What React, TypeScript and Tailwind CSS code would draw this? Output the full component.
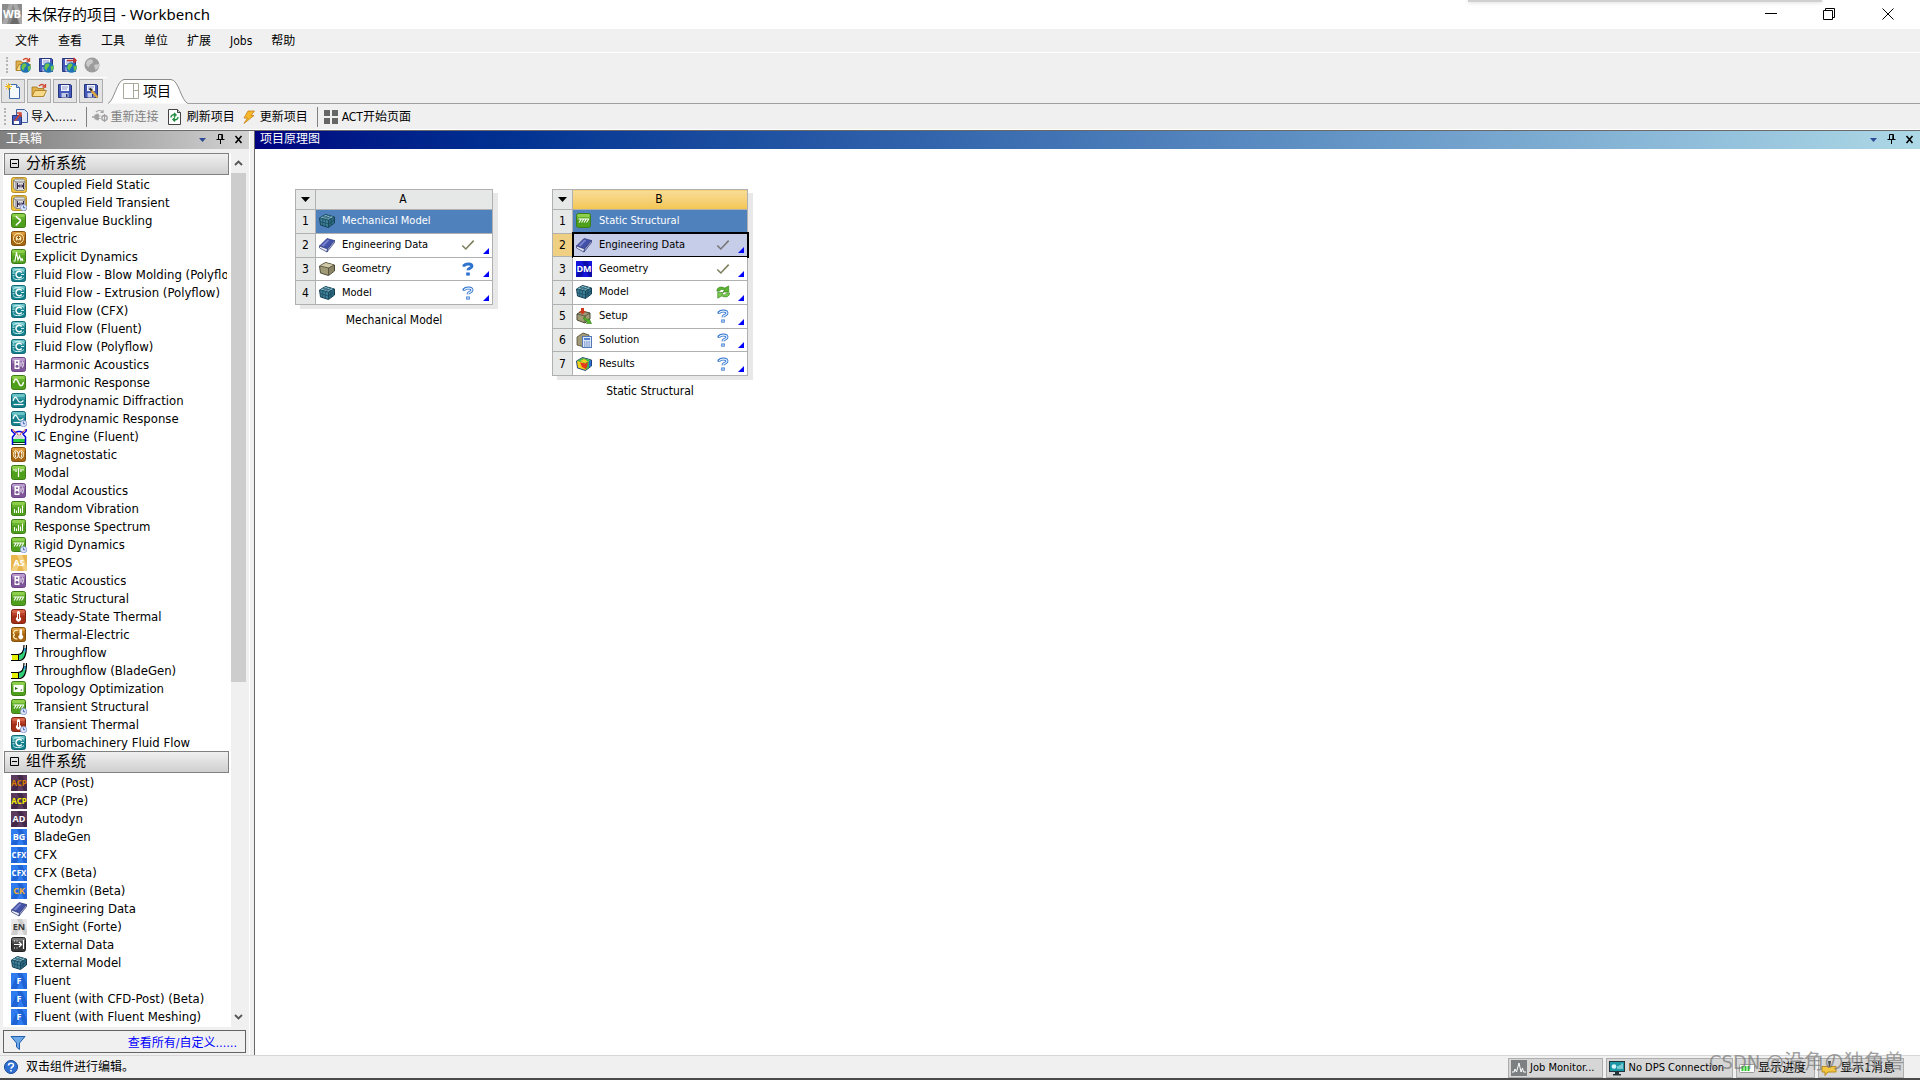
import { FC, ReactNode } from "react";

interface IconProps {
	children?: ReactNode;
	size?: number;
}

const Icon: FC<IconProps> = ({ children, size = 16 }) => (
	<svg width={size} height={size} viewBox="0 0 16 16" className="shrink-0" aria-hidden="true">
		{children}
	</svg>
);

const Clock = () => (
	<g>
		<circle cx="12.6" cy="12.6" r="3.2" fill="#dfe8fb" stroke="#7d93cf" strokeWidth="0.8" />
		<path d="M12.4 10.6v2.2h1.8" stroke="#3553a8" fill="none" strokeWidth="0.9" />
	</g>
);

const TILE_COLORS = {
	green: ["#8ed04b", "#4e9f1c", "#3d7c16"],
	teal: ["#6cc3c7", "#14808c", "#0e6974"],
	purple: ["#b99bcd", "#7f5799", "#6a4484"],
	orange: ["#dd9d3e", "#a8650f", "#83500d"],
	red: ["#d6654a", "#a52f16", "#7f2411"],
	dark: ["#777777", "#383838", "#222222"],
};

interface TileProps {
	color: keyof typeof TILE_COLORS;
	clock?: boolean;
	children?: ReactNode;
}

// rounded glossy square behind most analysis system icons
const Tile: FC<TileProps> = ({ color, clock, children }) => {
	const [top, base, edge] = TILE_COLORS[color];
	return (
		<Icon>
			<rect x="0.5" y="0.5" width="14" height="14" rx="2" fill={base} stroke={edge} />
			<rect x="1" y="1" width="13" height="3" rx="1.5" fill={top} />
			<rect x="1" y="3.5" width="13" height="3" fill={top} opacity="0.4" />
			{children}
			{clock && <Clock />}
		</Icon>
	);
};

const CoupledIcon = ({ clock }: { clock?: boolean }) => (
	<Icon>
		<rect x="0.5" y="0.5" width="15" height="15" rx="2" fill="#eec13f" stroke="#b98f26" />
		<path d="M2.5 3.500 4.500 2h8L14 3.500V12l-1.500 1.500H5L2.500 11z" fill="#dcdcdc" stroke="#777" strokeWidth="0.8" />
		<path d="M2.500 3.500 5 5h9M5 5v8.500" stroke="#777" fill="none" strokeWidth="0.9" />
		<path d="M6.500 6v6M12.500 6v6M7 9h5.500M8.800 7.500 7.500 9l1.300 1.500M10.800 7.500 12 9l-1.200 1.500" stroke="#35264f" fill="none" />
		{clock && <Clock />}
	</Icon>
);

const FluidIcon = () => (
	<Tile color="teal">
		<path d="M2 4.500C4 2 6 2.500 8 2.500c3 0 4 1.500 5 2M2 10.500C4 13 6 12.500 8 12.500c3 0 4-1.500 5-2M1.500 6.200h2M1.500 8.800h2" stroke="#c9f0f0" fill="none" />
		<path d="M10.700 5.500A3.200 3.200 0 1 0 10.700 9.500" stroke="#ffffff" fill="none" strokeWidth="1.500" />
		<path d="M10 7.500h3" stroke="#c9f0f0" />
	</Tile>
);

const AcousticsIcon = () => (
	<Tile color="purple">
		<rect x="3.5" y="3" width="5" height="9" fill="#fff" />
		<circle cx="6" cy="5.3" r="1" fill="#7f5799" />
		<circle cx="6" cy="9.2" r="1.5" fill="#7f5799" />
		<path d="M10 5.5v4M11.5 4.5c1 2 1 4 0 6" stroke="#fff" fill="none" />
	</Tile>
);

const SpectrumIcon = () => (
	<Tile color="green">
		<path d="M3.5 8v4M5.5 9.500v2.500M7.5 6v6M9.5 7.5v4.5M11.5 4.5V12" stroke="#fff" strokeWidth="1.1" />
	</Tile>
);

const StructuralIcon = ({ clock }: { clock?: boolean }) => (
	<Tile color="green" clock={clock}>
		<path d="M2.5 6h10.5M5 6.5l-2 3M7.5 6.5l-2 3M10 6.5l-2 3M12.5 6.5l-2 3" stroke="#fff" strokeWidth="1.1" />
	</Tile>
);

const ThermalIcon = ({ clock }: { clock?: boolean }) => (
	<Tile color="red" clock={clock}>
		<path d="M6 3.5a1.5 1.5 0 0 1 3 0V8a2.5 2.5 0 1 1-3 0z" fill="#fff" />
		<path d="M7.5 5v5" stroke="#a52f16" />
	</Tile>
);

const HydroIcon = ({ clock }: { clock?: boolean }) => (
	<Tile color="teal" clock={clock}>
		<path d="M2 8c1.5-5 3-5 4.5-1.5S9.5 10 12.5 7.5" stroke="#fff" fill="none" strokeWidth="1.2" />
		<path d="M2.5 11.5h10" stroke="#fff" strokeWidth="1.2" />
	</Tile>
);

const ThroughflowIcon = () => (
	<Icon>
		<path d="M1 10h6v5H1z" fill="#e8f000" />
		<path d="M7 10c3 0 4-2 4.500-4l3.500 1c-1 5-3 8-8 8z" fill="#2fd07a" />
		<path d="m11.500 6 1.500-3h2l-.3 4z" fill="#2ba9e0" />
		<path d="M0 9.500h7c4 0 6-3 6-9.500M0 15.500h8c6 0 7.500-7 7.500-15.500" fill="none" stroke="#000" strokeWidth="1.200" />
		<path d="M7.500 9.500v6" stroke="#000" />
	</Icon>
);

interface BadgeProps {
	label: string;
	bg: string;
	shade: string;
	fg: string;
}

const LetterIcon: FC<BadgeProps> = ({ label, bg, shade, fg }) => (
	<Icon>
		<rect width="16" height="16" fill={bg} />
		<path d="M8 0h3l5 11v5h-3L6 0zM0 16 5 4l3 6-2 6z" fill={shade} />
		<text
			x="8"
			y="11"
			textAnchor="middle"
			fontSize={label.length > 2 ? 8 : 9}
			fontWeight="700"
			fontFamily="'Open Sans', sans-serif"
			fill={fg}
		>
			{label}
		</text>
	</Icon>
);

const FluentIcon = () => <LetterIcon label="F" bg="#2f7bf0" shade="#1f63d4" fg="#fff" />;
const CfxIcon = () => <LetterIcon label="CFX" bg="#2f7bf0" shade="#1f63d4" fg="#fff" />;

const BookIcon = () => (
	<Icon>
		<path d="M.5 9 8 1.500l7.500 2L8.500 12z" fill="#4352a8" stroke="#2c3878" strokeWidth="0.7" />
		<path d="M.5 9v2l7.500 4 .5-3z" fill="#e9ebf6" stroke="#2c3878" strokeWidth="0.7" />
		<path d="m8.500 12 7-8.500v2L8 15z" fill="#a9afd6" stroke="#2c3878" strokeWidth="0.7" />
		<path d="m2.500 8.500 6-6 2 .6-6 6.400z" fill="#7783ce" />
	</Icon>
);

const CubeIcon = ({ mesh }: { mesh?: boolean }) => (
	<Icon>
		<path d="m.5 5 6-3.500L15.500 4v6l-6 4.500-8-2.500z" fill={mesh ? "#3b8098" : "#a19a76"} stroke={mesh ? "#173f51" : "#4c4937"} strokeLinejoin="round" />
		<path d="m1 5 5.500-3L15 4 9.500 7z" fill={mesh ? "#7fbccd" : "#cfc9a8"} />
		<path d="M9.500 7 15 4v6l-5.500 4z" fill={mesh ? "#2b6a82" : "#8b8566"} />
		<path d="m1 5 8.500 2L15 4M9.500 7v7" stroke={mesh ? "#173f51" : "#4c4937"} fill="none" strokeWidth="0.8" />
		{mesh && (
			<path d="m1 8.500 8.500 2.500 5.500-4M3.700 5.700v6.800M6.300 6.300v7.200M12 6v6.500M4 3.300l8 2.200M6.500 6.300l5.500-3.200M3.700 5.700l5.500-3.200" stroke="#173f51" fill="none" strokeWidth="0.600" />
		)}
	</Icon>
);

const CheckIcon = ({ color = "#7f7f5f" }: { color?: string }) => (
	<Icon size={14}>
		<path d="m1.500 8.500 4 4L14.500 3" stroke={color} fill="none" strokeWidth="1.800" />
	</Icon>
);

const QuestionIcon = ({ solid }: { solid?: boolean }) => (
	<Icon size={14}>
		<path d="M3.500 5.500V4c2-2.500 9-2.500 9 .8 0 2.500-4.500 2-4.500 4.700" stroke="#2f73cf" fill="none" strokeWidth="3.400" />
		{!solid && <path d="M3.500 4.500c2-2.700 9-2.700 9 .3 0 2.500-4.500 2-4.500 4.700" stroke="#e8f2ff" fill="none" strokeWidth="1.400" />}
		<rect x="6.500" y="12.500" width="3" height="2.500" fill={solid ? "#2f73cf" : "#e8f2ff"} stroke="#2f73cf" />
	</Icon>
);

const RefreshIcon = () => (
	<Icon size={14}>
		<path d="M1 7C1 3 5 1 10 3.500L14.500 1v7H8l2-2C7 4.500 4.500 5 4 7z" fill="#5cb531" stroke="#2f7a14" strokeWidth="0.7" />
		<path d="M15.500 9c0 4-4 6-9 3.500L2 15V8.500h6.500l-2 2c3 1.500 5 .5 5.500-1.500z" fill="#7ccc50" stroke="#2f7a14" strokeWidth="0.7" />
	</Icon>
);

const SetupIcon = () => (
	<Icon>
		<path d="m1 6 5-3 8 2v6l-5 4-8-3z" fill="#a19a76" stroke="#4c4937" />
		<path d="m1 6 8 2 5-3M9 8v7" stroke="#4c4937" fill="none" strokeWidth="0.8" />
		<path d="M5 0h3v3h2L6.500 6.500 3 3h2z" fill="#cf3a1e" />
		<path d="m8 9 4 3 1-1.500 2.500 5h-5l1-1.500-4-3z" fill="#55b529" stroke="#2f7a14" strokeWidth="0.600" />
	</Icon>
);

const SolutionIcon = () => (
	<Icon>
		<path d="m1 5 6-4 6 2v9l-5 3-7-2z" fill="#a19a76" stroke="#4c4937" strokeWidth="0.8" />
		<rect x="6.500" y="4.500" width="9" height="11" fill="#dce8fa" stroke="#5578b8" />
		<rect x="8" y="6" width="6" height="2" fill="#4f7fd0" />
		<path d="M8 10h6M8 12h6M8 14h6" stroke="#5578b8" strokeDasharray="1.500 0.700" />
	</Icon>
);

const ResultsIcon = () => (
	<Icon>
		<path d="m.5 5 6-3.500L15.500 4v6l-6 4.500-8-2.500z" fill="#f2d21d" stroke="#21407e" strokeLinejoin="round" />
		<path d="m1 5 5.500-3L15 4 9.500 7z" fill="#3fb44a" />
		<path d="m4 5 4-2 4 2.500L9.500 7z" fill="#f2d21d" />
		<path d="M9.500 7 15 4v6l-5.500 4z" fill="#3fb44a" />
		<path d="m13 5 2-1v6l-2 1.500z" fill="#2a6bd6" />
		<path d="m4 6.500 5.500 1L12 6l-1 5-1.500 2L6 11z" fill="#e23a1b" />
	</Icon>
);

const Floppy = () => (
	<g>
		<path d="M1.500 1.500h12l1 1v12h-13z" fill="#4459b8" stroke="#27357d" />
		<rect x="4" y="2" width="8" height="6" fill="#f2f4fc" />
		<path d="M5 4h6M5 6h5" stroke="#8b97cf" />
		<rect x="4.500" y="10" width="7" height="4.500" fill="#c3cae8" />
		<rect x="9" y="11" width="1.500" height="3" fill="#27357d" />
	</g>
);

const Globe = () => (
	<g>
		<circle cx="10.500" cy="10.500" r="5.300" fill="#1c73b8" />
		<path d="M7 8c2-2.500 4.500-1.500 4.500 0S9 10 9 12.500s-2-.5-2.700-1.500zM12.500 9.500l3-1c.6 2 0 4.500-2 6z" fill="#6ec54a" />
	</g>
);

const Folder = () => (
	<g>
		<path d="M1 4h5l1 1.500h6V13H1z" fill="#e0b04a" stroke="#a3761d" strokeWidth="0.8" />
		<path d="m1 13.500 3-6h11.500l-3 6z" fill="#f8d987" stroke="#a3761d" strokeWidth="0.8" />
		<path d="M8 3c2-2 4-2 5.500 0M14.500 1v3h-3" stroke="#d2452d" fill="none" strokeWidth="1.3" />
	</g>
);

interface ListItem {
	name: string;
	icon: ReactNode;
}

const ANALYSIS_SYSTEMS: ListItem[] = [
	{ name: "Coupled Field Static", icon: <CoupledIcon /> },
	{ name: "Coupled Field Transient", icon: <CoupledIcon clock /> },
	{
		name: "Eigenvalue Buckling",
		icon: (
			<Tile color="green">
				<path d="M5 3c1 2.500 4.500 3 4.500 4.500S6 10 5 12.500" stroke="#fff" fill="none" strokeWidth="1.6" />
			</Tile>
		),
	},
	{
		name: "Electric",
		icon: (
			<Tile color="orange">
				<circle cx="7.500" cy="7.500" r="5" fill="none" stroke="#ffeeb8" />
				<circle cx="7.500" cy="7.500" r="2.800" fill="#ffeeb8" />
				<path d="M6 6.500h3M7.500 5v3M6 9.300h3" stroke="#83500d" strokeWidth="0.9" />
			</Tile>
		),
	},
	{
		name: "Explicit Dynamics",
		icon: (
			<Tile color="green">
				<path d="M2.500 12h1.500L5.500 3l1.500 8 1.500-4 1.500 4.500 1-2 1 2.500" stroke="#fff" fill="none" strokeWidth="1.1" />
			</Tile>
		),
	},
	{ name: "Fluid Flow - Blow Molding (Polyflow)", icon: <FluidIcon /> },
	{ name: "Fluid Flow - Extrusion (Polyflow)", icon: <FluidIcon /> },
	{ name: "Fluid Flow (CFX)", icon: <FluidIcon /> },
	{ name: "Fluid Flow (Fluent)", icon: <FluidIcon /> },
	{ name: "Fluid Flow (Polyflow)", icon: <FluidIcon /> },
	{ name: "Harmonic Acoustics", icon: <AcousticsIcon /> },
	{
		name: "Harmonic Response",
		icon: (
			<Tile color="green">
				<path d="M2.500 8c1-5 3.500-5 5-.5s4 4 5-.5" stroke="#fff" fill="none" strokeWidth="1.4" />
			</Tile>
		),
	},
	{ name: "Hydrodynamic Diffraction", icon: <HydroIcon /> },
	{ name: "Hydrodynamic Response", icon: <HydroIcon clock /> },
	{
		name: "IC Engine (Fluent)",
		icon: (
			<Icon>
				<path d="m3.500 8 2.500-2.500h4L12.500 8v2h-9z" fill="#d8d8d8" />
				<path d="M2 10h12v3H2z" fill="#20cc40" />
				<path d="M2 13.500h12M2 15.500h12" stroke="#0a3a1a" />
				<path d="M.8 0v2L4 5 1.500 8v8M15.200 0v2L12 5l2.500 3v8M4 3.500l3-1h2l3 1" stroke="#0000e0" fill="none" strokeWidth="1.500" />
				<path d="m1.500.5 6 5.500M14.500.5l-6 5.500" stroke="#d43a3a" strokeWidth="1.100" strokeDasharray="1.500 0.500" />
			</Icon>
		),
	},
	{
		name: "Magnetostatic",
		icon: (
			<Tile color="orange">
				<path d="M5 3C1.500 5 1.500 10 5 12M10 3c3.500 2 3.500 7 0 9" stroke="#ffeeb8" fill="none" />
				<ellipse cx="5.700" cy="7.500" rx="1.600" ry="3.500" fill="none" stroke="#fff" />
				<ellipse cx="9.300" cy="7.500" rx="1.600" ry="3.500" fill="none" stroke="#fff" />
			</Tile>
		),
	},
	{
		name: "Modal",
		icon: (
			<Tile color="green">
				<path d="M7.500 3v9M5 4v3M10 4v3M3 4v1.500M12 4v1.500" stroke="#fff" strokeWidth="1.2" />
			</Tile>
		),
	},
	{ name: "Modal Acoustics", icon: <AcousticsIcon /> },
	{ name: "Random Vibration", icon: <SpectrumIcon /> },
	{ name: "Response Spectrum", icon: <SpectrumIcon /> },
	{ name: "Rigid Dynamics", icon: <StructuralIcon clock /> },
	{ name: "SPEOS", icon: <LetterIcon label="AS" bg="#e9b64c" shade="#f3cf80" fg="#fff" /> },
	{ name: "Static Acoustics", icon: <AcousticsIcon /> },
	{ name: "Static Structural", icon: <StructuralIcon /> },
	{ name: "Steady-State Thermal", icon: <ThermalIcon /> },
	{
		name: "Thermal-Electric",
		icon: (
			<Tile color="orange">
				<path d="M6.500 3.500C2 3 1.500 7.500 4 7.500M6.500 12C2 12 1.500 8 4 8" stroke="#ffeeb8" fill="none" strokeWidth="1.2" />
				<path d="M8.500 3.500a1.300 1.300 0 0 1 2.600 0V8a2.300 2.300 0 1 1-2.600 0z" fill="#fff" />
			</Tile>
		),
	},
	{ name: "Throughflow", icon: <ThroughflowIcon /> },
	{ name: "Throughflow (BladeGen)", icon: <ThroughflowIcon /> },
	{
		name: "Topology Optimization",
		icon: (
			<Tile color="green">
				<rect x="2.500" y="4" width="10" height="7" fill="#fff" />
				<path d="m4 6 3 1.500L4 9zM9 9.500h2V8z" fill="#2f6f12" />
			</Tile>
		),
	},
	{ name: "Transient Structural", icon: <StructuralIcon clock /> },
	{ name: "Transient Thermal", icon: <ThermalIcon clock /> },
	{ name: "Turbomachinery Fluid Flow", icon: <FluidIcon /> },
];

const COMPONENT_SYSTEMS: ListItem[] = [
	{ name: "ACP (Post)", icon: <LetterIcon label="ACP" bg="#5b3a5e" shade="#44284a" fg="#d97a00" /> },
	{ name: "ACP (Pre)", icon: <LetterIcon label="ACP" bg="#5b3a5e" shade="#44284a" fg="#f5f000" /> },
	{ name: "Autodyn", icon: <LetterIcon label="AD" bg="#5b3a5e" shade="#44284a" fg="#fff" /> },
	{ name: "BladeGen", icon: <LetterIcon label="BG" bg="#2f7bf0" shade="#1f63d4" fg="#fff" /> },
	{ name: "CFX", icon: <CfxIcon /> },
	{ name: "CFX (Beta)", icon: <CfxIcon /> },
	{ name: "Chemkin (Beta)", icon: <LetterIcon label="CK" bg="#2f7bf0" shade="#1f63d4" fg="#f0b030" /> },
	{ name: "Engineering Data", icon: <BookIcon /> },
	{ name: "EnSight (Forte)", icon: <LetterIcon label="EN" bg="#e8e8e8" shade="#cfcfcf" fg="#3c3c3c" /> },
	{
		name: "External Data",
		icon: (
			<Tile color="dark">
				<path d="M3 7.500h7M8 5l2.500 2.500L8 10M12.500 3v9" stroke="#fff" fill="none" strokeWidth="1.2" />
				<path d="M3 4h5M3 11h5" stroke="#fff" strokeDasharray="1 1.5" />
			</Tile>
		),
	},
	{ name: "External Model", icon: <CubeIcon mesh /> },
	{ name: "Fluent", icon: <FluentIcon /> },
	{ name: "Fluent (with CFD-Post) (Beta)", icon: <FluentIcon /> },
	{ name: "Fluent (with Fluent Meshing)", icon: <FluentIcon /> },
	{ name: "", icon: <LetterIcon label="" bg="#2f7bf0" shade="#1f63d4" fg="#fff" /> },
];

const TitleBar = () => (
	<header className="flex h-[29px] items-center bg-white pr-0.5 pb-0.5 pl-0.5">
		<svg width="20" height="20" viewBox="0 0 20 20" aria-hidden="true">
			<rect width="20" height="20" fill="#8c8c8c" />
			<path d="M0 20 7 0h4L5 20zM11 0h4l5 13v7h-2z" fill="#a9a9a9" />
			<path d="M8 20 13 9l4 11z" fill="#6a6a6a" />
			<text x="10" y="14" textAnchor="middle" fontSize="11" fontWeight="700" fontFamily="'Open Sans', sans-serif" fill="#fff">
				WB
			</text>
		</svg>
		<h1 className="ml-[5px] flex-1 font-['Noto_Sans','Noto_Sans_CJK_SC',sans-serif] text-[15px] leading-5">
			未保存的项目 - Workbench
		</h1>
		<div className="flex">
			<button aria-label="Minimize" className="flex h-7 w-[58px] items-center justify-center">
				<svg width="12" height="12" viewBox="0 0 12 12"><path d="M0 5.500h12" stroke="#000" /></svg>
			</button>
			<button aria-label="Restore" className="flex h-7 w-[58px] items-center justify-center">
				<svg width="12" height="12" viewBox="0 0 12 12"><path d="M.5 2.500h9v9h-9zM2.500 2.500v-2h9v9h-2" stroke="#000" fill="none" /></svg>
			</button>
			<button aria-label="Close" className="flex h-7 w-[60px] items-center justify-center">
				<svg width="12" height="12" viewBox="0 0 12 12"><path d="m.5.5 11 11m0-11-11 11" stroke="#000" fill="none" /></svg>
			</button>
		</div>
	</header>
);

const MENUS = ["文件", "查看", "工具", "单位", "扩展", "Jobs", "帮助"];

const MenuBar = () => (
	<nav className="flex h-6 items-center gap-[19px] border-b border-white pl-[15px]">
		{MENUS.map((menu) => (
			<button key={menu} className="leading-4">{menu}</button>
		))}
	</nav>
);

const Grip = () => <span className="my-1 w-0 self-stretch border-l-2 border-dotted border-[#b4b4b4]" />;

const GlobalToolbar = () => (
	<div className="flex h-[25px] w-[107px] items-center gap-[7px] border-b border-white pl-1.5">
		<Grip />
		<button aria-label="Open remote">
			<Icon><Folder /><Globe /></Icon>
		</button>
		<button aria-label="Save remote">
			<Icon><Floppy /><Globe /></Icon>
		</button>
		<button aria-label="Send changes">
			<Icon><Floppy /><path d="M6 3.500h9M12.500 1 15 3.500 12.500 6" stroke="#c8342b" fill="none" strokeWidth="1.500" /><Globe /></Icon>
		</button>
		<button aria-label="Disconnect" disabled>
			<Icon>
				<circle cx="8" cy="8" r="7.500" fill="#9c9c9c" />
				<path d="M3 4c3-3 6-2 6 .5S5 7 5 9.500 2 8 2 6.500zM10 8l5-1c.5 3-1 5-3.500 6z" fill="#cacaca" />
			</Icon>
		</button>
	</div>
);

const FILE_ACTIONS: ListItem[] = [
	{
		name: "New",
		icon: (
			<Icon>
				<path d="M4.500 1.500h7l3 3v11h-10z" fill="#f4f9ff" stroke="#3f6aa8" />
				<path d="M11.500 1.500v3h3" fill="#bcd4f2" stroke="#3f6aa8" />
				<path d="M3.500 0v7M0 3.500h7M1 1l5 5M6 1 1 6" stroke="#efbc2a" />
			</Icon>
		),
	},
	{ name: "Open", icon: <Icon><Folder /></Icon> },
	{ name: "Save", icon: <Icon><Floppy /></Icon> },
	{
		name: "Save as",
		icon: (
			<Icon>
				<Floppy />
				<path d="m8 7 6.500 7.500" stroke="#dba53a" strokeWidth="2.500" />
				<path d="m6.500 5.500 2.500 2" stroke="#222" strokeWidth="2" />
			</Icon>
		),
	},
];

const TabRow = () => (
	<div className="flex h-[26px] items-end">
		<div className="flex gap-0.5 pb-px pl-px">
			{FILE_ACTIONS.map(({ name, icon }) => (
				<button
					key={name}
					aria-label={name}
					className="flex size-6 items-center justify-center border border-[#adadad] bg-[#e3e3e3]"
				>
					{icon}
				</button>
			))}
		</div>
		<button className="relative ml-[5px] flex h-[25px] w-20 items-center gap-1 pb-0.5 pl-[15px]">
			<svg width="80" height="25" viewBox="0 0 80 25" className="absolute inset-0" aria-hidden="true">
				<path d="M0 24.500C6 22 9 1 16 .5h47C71 1 73 22 80 24.500" fill="#fff" stroke="#8c8c8c" />
			</svg>
			<svg width="16" height="16" viewBox="0 0 16 16" className="relative" aria-hidden="true">
				<path d="M.5.5h15v15H.5zM10.500.5v15M10.500 7.500h5" fill="none" stroke="#a9a99a" />
			</svg>
			<span className="relative text-[14px] leading-5">项目</span>
		</button>
		<div className="h-px flex-1 bg-[#a0a0a0]" />
	</div>
);

const Separator = () => <span className="h-5 w-px bg-[#808080]" />;

const ProjectToolbar = () => (
	<div className="flex h-[26px] items-center border-b border-white pl-1">
		<Grip />
		<button className="ml-1.5 flex items-center gap-[3px] leading-4">
			<Icon>
				<path d="M4.500.5h8l3 3v10h-11z" fill="#dfe9f8" stroke="#3f5f9f" />
				<path d="M.5 6.500h9v9h-9z" fill="#4459b8" stroke="#27357d" />
				<path d="m3 12 5-7M5 4h4v4" stroke="#d2452d" fill="none" strokeWidth="1.500" />
				<rect x="2" y="12" width="5" height="3" fill="#fff" />
			</Icon>
			导入……
		</button>
		<span className="ml-[9px] flex"><Separator /></span>
		<button disabled className="ml-[5px] flex items-center gap-[3px] leading-4 text-[#808080]">
			<Icon>
				<path d="M0 8h3M5 5.500h1v5H5z" stroke="#a0a0a0" strokeWidth="1.500" />
				<path d="M2.500 5.500h4v5h-4z" fill="#a0a0a0" />
				<path d="M6.500 7h2M6.500 9.500h2M12.500 5v8M4 3c2-2 5-2 6.500 0M11 1v2.500H8.500" stroke="#a0a0a0" fill="none" strokeWidth="1.200" />
				<ellipse cx="12.500" cy="9" rx="2.700" ry="2.500" fill="none" stroke="#a0a0a0" strokeWidth="1.300" />
			</Icon>
			重新连接
		</button>
		<button className="ml-2 flex items-center gap-1 leading-4">
			<Icon>
				<path d="M1.500.5h9l3 3v12h-12z" fill="#fff" stroke="#444" />
				<path d="M10.500.5v3h3" fill="#ccc" stroke="#444" />
				<path d="M4 8.500C4 6 6 5.500 8 6M7 4l2 2-2 2M11 8c0 2.500-2 3-4 2.500M8 12.500l-2-2 2-2" stroke="#1f8a3a" fill="none" strokeWidth="1.400" />
			</Icon>
			刷新项目
		</button>
		<button className="ml-1.5 flex items-center gap-[3px] leading-4">
			<Icon>
				<path d="M7 2h6.500L10 6.500h3L3 14.500 6.500 9H3z" fill="#f7b92c" stroke="#c77f13" strokeWidth="0.8" />
			</Icon>
			更新项目
		</button>
		<span className="ml-[9px] flex"><Separator /></span>
		<button className="ml-[5px] flex items-center gap-[3px] leading-4">
			<Icon>
				<path d="M1 1h6v6H1zM9 1h6v6H9zM1 9h6v6H1zM9 9h6v6H9z" fill="#666" />
			</Icon>
			ACT开始页面
		</button>
	</div>
);

const PaneControls = () => (
	<div className="ml-auto flex items-center gap-[9px] pr-1.5">
		<button aria-label="Options">
			<svg width="9" height="10" viewBox="0 0 9 10"><path d="M1 4h7L4.500 8z" fill="#2d4a94" /></svg>
		</button>
		<button aria-label="Pin">
			<svg width="9" height="10" viewBox="0 0 9 10"><path d="M2.500 5.500v-5h4v5M.5 5.500h8M4.500 5.500V10M5.800 1v4" stroke="#000" fill="none" /></svg>
		</button>
		<button aria-label="Close pane">
			<svg width="9" height="10" viewBox="0 0 9 10"><path d="m1.500 2 6 7m0-7-6 7" stroke="#000" strokeWidth="1.600" /></svg>
		</button>
	</div>
);

interface GroupProps {
	title: string;
	items: ListItem[];
}

const ToolboxGroup: FC<GroupProps> = ({ title, items }) => (
	<section>
		<h2 className="mr-0.5 ml-px">
			<button className="flex h-[22px] w-full items-center gap-[7px] border border-[#808080] bg-linear-to-b from-[#f0f0f0] to-[#cfcfcf] pb-0.5 pl-[5px] text-[15px] leading-5">
				<svg width="9" height="9" viewBox="0 0 9 9" aria-hidden="true">
					<path d="M.5.5h8v8h-8zM2 4.500h5" fill="none" stroke="#000" />
				</svg>
				{title}
			</button>
		</h2>
		<ul className="text-[13px]">
			{items.map(({ name, icon }) => (
				<li key={name} className="flex h-[18px] items-center gap-[7px] overflow-hidden pt-0.5 pl-2 whitespace-nowrap">
					{icon}
					<span className="mr-1 overflow-hidden">{name}</span>
				</li>
			))}
		</ul>
	</section>
);

const Toolbox = () => (
	<aside className="flex w-[250px] shrink-0 flex-col border-r border-white">
		<div className="flex h-[18px] shrink-0 items-center bg-linear-to-r from-[#808080] to-[#d3d3d3] pb-0.5 pl-1.5 leading-4 text-white">
			工具箱
			<PaneControls />
		</div>
		<div className="mx-[3px] mt-1 flex min-h-0 flex-1">
			<div className="min-w-0 flex-1 overflow-hidden bg-white">
				<ToolboxGroup title="分析系统" items={ANALYSIS_SYSTEMS} />
				<ToolboxGroup title="组件系统" items={COMPONENT_SYSTEMS} />
			</div>
			<div className="flex w-[15px] flex-col bg-[#f0f0f0]">
				<button aria-label="Scroll up" className="flex h-5 items-center justify-center">
					<svg width="9" height="6" viewBox="0 0 9 6"><path d="m1 5 3.500-3.500L8 5" stroke="#555" fill="none" strokeWidth="1.800" /></svg>
				</button>
				<div className="flex-1">
					<div className="h-[61%] bg-[#cdcdcd]" />
				</div>
				<button aria-label="Scroll down" className="flex h-5 items-center justify-center">
					<svg width="9" height="6" viewBox="0 0 9 6"><path d="m1 1 3.500 3.500L8 1" stroke="#555" fill="none" strokeWidth="1.800" /></svg>
				</button>
			</div>
		</div>
		<div className="mx-[3px] mt-[3px] mb-0.5 flex h-[23px] shrink-0 items-center justify-between border border-[#646464] pt-0.5 pr-2 pl-1.5">
			<Icon>
				<path d="M1 1.500h14L9.500 8v6.500L6.500 12V8z" fill="#6fa9e6" stroke="#1f5fb0" />
			</Icon>
			<a href="#customize" className="text-[#0000ff]">查看所有/自定义……</a>
		</div>
	</aside>
);

interface Cell extends ListItem {
	status?: ReactNode;
}

interface SystemProps {
	letter: string;
	title: string;
	cells: Cell[];
	selected?: number;
	className: string;
	tableClassName: string;
}

const SystemBlock: FC<SystemProps> = ({ letter, title, cells, selected, className, tableClassName }) => (
	<figure className={`absolute ${className}`}>
		<table className={`w-full border-collapse border border-[#c3c3c3] text-[11px] shadow-[5px_4px_0_#e8e8e8] ${tableClassName}`}>
			<thead>
				<tr className="h-5">
					<th className="w-5 border border-[#b0b0b0] bg-[#e6e8e8] p-0">
						<button aria-label="System menu" className="block w-full">
							<svg width="9" height="5" viewBox="0 0 9 5" className="mx-auto"><path d="M0 0h9L4.500 5z" fill="#000" /></svg>
						</button>
					</th>
					<th
						className={`border border-[#b0b0b0] pr-0.5 pb-0.5 text-[12px] leading-4 font-normal ${
							selected ? "bg-linear-to-b from-[#f8dc98] to-[#f3c650]" : "bg-[#e6e8e8]"
						}`}
					>
						{letter}
					</th>
				</tr>
			</thead>
			<tbody>
				{cells.map(({ name, icon, status }, i) => {
					const isSelected = selected === i + 1;
					return (
						<tr key={name}>
							<td className={`border border-[#b0b0b0] p-0 text-center text-[12px] leading-4 ${isSelected ? "bg-[#efd083]" : "bg-[#e6e8e8]"}`}>
								{i + 1}
							</td>
							<td
								className={`relative border border-[#b0b0b0] p-0 ${i === 0 ? "bg-[#4f81bd] text-white" : isSelected ? "bg-[#c6cde8]" : "bg-white"} ${
									isSelected ? "outline-2 -outline-offset-1 outline-black" : ""
								}`}
							>
								<div className="flex items-center gap-[7px] pr-[17px] pl-[3px] leading-4">
									{icon}
									<span className="flex-1">{name}</span>
									{status}
								</div>
								{i > 0 && (
									<svg width="6" height="6" viewBox="0 0 6 6" className="absolute right-[3px] bottom-[3px]" aria-hidden="true">
										<path d="M6 0v6H0z" fill="#0000ff" />
									</svg>
								)}
							</td>
						</tr>
					);
				})}
			</tbody>
		</table>
		<figcaption className="mt-[7px] text-center leading-4">{title}</figcaption>
	</figure>
);

const MECHANICAL_CELLS: Cell[] = [
	{ name: "Mechanical Model", icon: <CubeIcon mesh /> },
	{ name: "Engineering Data", icon: <BookIcon />, status: <CheckIcon /> },
	{ name: "Geometry", icon: <CubeIcon />, status: <QuestionIcon solid /> },
	{ name: "Model", icon: <CubeIcon mesh />, status: <QuestionIcon /> },
];

const STATIC_CELLS: Cell[] = [
	{ name: "Static Structural", icon: <StructuralIcon /> },
	{ name: "Engineering Data", icon: <BookIcon />, status: <CheckIcon color="#777777" /> },
	{ name: "Geometry", icon: <LetterIcon label="DM" bg="#1414dc" shade="#0c0caa" fg="#fff" />, status: <CheckIcon /> },
	{ name: "Model", icon: <CubeIcon mesh />, status: <RefreshIcon /> },
	{ name: "Setup", icon: <SetupIcon />, status: <QuestionIcon /> },
	{ name: "Solution", icon: <SolutionIcon />, status: <QuestionIcon /> },
	{ name: "Results", icon: <ResultsIcon />, status: <QuestionIcon /> },
];

const Schematic = () => (
	<main className="ml-1 flex min-w-0 flex-1 flex-col border-l border-[#696969] bg-white">
		<div className="flex h-[18px] shrink-0 items-center bg-linear-to-r from-[#000080] to-[#add8e6] pb-0.5 pl-[5px] leading-4 text-white">
			项目原理图
			<PaneControls />
		</div>
		<div className="relative flex-1">
			<SystemBlock
				letter="A"
				title="Mechanical Model"
				cells={MECHANICAL_CELLS}
				className="top-10 left-10 w-[198px]"
				tableClassName="h-[116px]"
			/>
			<SystemBlock
				letter="B"
				title="Static Structural"
				cells={STATIC_CELLS}
				selected={2}
				className="top-10 left-[297px] w-[196px]"
				tableClassName="h-[187px]"
			/>
		</div>
	</main>
);

const JOB_BUTTONS: ListItem[] = [
	{
		name: "Job Monitor...",
		icon: (
			<Icon>
				<rect width="16" height="16" fill="#7c8080" />
				<path d="M1 12h2l1-3 1.500 3L8 3l2 9 1.500-4 1 4H15" stroke="#fff" fill="none" />
			</Icon>
		),
	},
	{
		name: "No DPS Connection",
		icon: (
			<Icon>
				<rect x="0.500" y="1.500" width="15" height="10" fill="#1c97a6" stroke="#23343a" />
				<circle cx="5" cy="6.500" r="2.300" fill="#d7f6fa" />
				<path d="M9 9V6M11 9V5M13 9V3.500" stroke="#d7f6fa" />
				<path d="M6 12h4v2h2v1.500H4V14h2z" fill="#23343a" />
			</Icon>
		),
	},
];

const VIEW_BUTTONS: ListItem[] = [
	{
		name: "显示进度",
		icon: (
			<Icon>
				<rect x="0.500" y="4.500" width="15" height="8" rx="1" fill="#fff" stroke="#9a9a9a" />
				<path d="M3.500 6v5M6.500 6v5M9.500 6v5" stroke="#28c828" strokeWidth="2" />
			</Icon>
		),
	},
	{
		name: "显示1消息",
		icon: (
			<Icon>
				<path d="M1 6.500h14v5.500H7l-3 3.500V12H1z" fill="#f2c542" stroke="#b98a1c" />
				<path d="M7 1h3L9 7H8z" fill="#4a4a4a" />
			</Icon>
		),
	},
];

const StatusButtons = ({ items }: { items: ListItem[] }) => (
	<>
		{items.map(({ name, icon }) => (
			<button key={name} className="flex h-5 items-center gap-[3px] border border-[#adadad] bg-[#d6d6d6] pr-2 pl-0.5 leading-4">
				{icon}
				{name}
			</button>
		))}
	</>
);

const StatusBar = () => (
	<footer className="relative flex h-[25px] items-center border-t border-b-2 border-t-[#d7d7d7] border-b-[#4a4a4a] pr-4 pl-1">
		<svg width="14" height="14" viewBox="0 0 14 14" aria-hidden="true">
			<circle cx="7" cy="7" r="6.500" fill="#2d6fd2" stroke="#1b4796" />
			<path d="M4.500 5.500C4.500 2.500 9.500 2.500 9.500 5.200 9.500 7 7 7 7 8.700M7 10v1.500" stroke="#fff" fill="none" strokeWidth="1.600" />
		</svg>
		<p className="ml-2 flex-1">双击组件进行编辑。</p>
		<div className="flex gap-[3px] self-end">
			<div className="flex gap-[3px] text-[11px]">
				<StatusButtons items={JOB_BUTTONS} />
			</div>
			<StatusButtons items={VIEW_BUTTONS} />
		</div>
		<span className="absolute -top-1.5 right-4 text-[20px] leading-6 whitespace-nowrap text-[#777777]/70">
			CSDN @没角の独角兽
		</span>
	</footer>
);

export default function App() {
	return (
		<div className="relative flex h-screen flex-col overflow-hidden bg-[#f0f0f0] font-['DejaVu_Sans_Condensed','Noto_Sans_CJK_SC',sans-serif] text-[12px] leading-4 text-black">
			<div className="absolute top-0 right-[98px] h-0.5 w-[354px] bg-[#d0d0d0] shadow-[0_0_4px_#c0c0c0]" />
			<TitleBar />
			<MenuBar />
			<GlobalToolbar />
			<TabRow />
			<ProjectToolbar />
			<div className="flex min-h-0 flex-1 border-t border-[#696969]">
				<Toolbox />
				<Schematic />
			</div>
			<StatusBar />
		</div>
	);
}
